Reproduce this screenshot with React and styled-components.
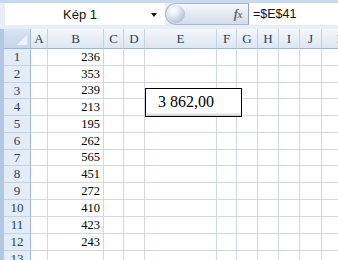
import styled, { createGlobalStyle } from "styled-components";

const GlobalStyle = createGlobalStyle`
  html, body {
    margin: 0;
    padding: 0;
    background: #ffffff;
  }
  * {
    box-sizing: border-box;
  }
`;

const COLUMNS = [
  { name: "A", width: 17 },
  { name: "B", width: 56 },
  { name: "C", width: 20 },
  { name: "D", width: 21 },
  { name: "E", width: 72 },
  { name: "F", width: 20 },
  { name: "G", width: 21 },
  { name: "H", width: 21 },
  { name: "I", width: 21 },
  { name: "J", width: 22 },
  { name: "K", width: 40 },
];

const VALUES = [236, 353, 239, 213, 195, 262, 565, 451, 272, 410, 423, 243, null];
const ROW_HEIGHTS = [17, 17, 16, 17, 17, 17, 16, 17, 17, 17, 17, 17, 17];

const Window = styled.div`
  width: 338px;
  height: 260px;
  overflow: hidden;
  background: #b3c7e3;
  padding-left: 4px;
  display: flex;
  flex-direction: column;
`;

const FormulaBar = styled.div`
  height: 29px;
  flex-shrink: 0;
  display: flex;
  align-items: flex-start;
  padding: 3px 0 0 1px;
  margin-left: -4px;
  padding-left: 5px;
  background: linear-gradient(#c9d9ee 0, #c9d9ee 3px, #e8eef7 3px, #e8eef7 100%);
`;

const NameBox = styled.div`
  position: relative;
  width: 160px;
  height: 22px;
  background: #ffffff;
  font-family: "Liberation Sans", Arial, sans-serif;
  font-size: 13px;
  color: #111;
  display: flex;
  align-items: center;
  justify-content: center;
  padding-right: 10px;
`;

const DropArrow = styled.span`
  position: absolute;
  right: 8px;
  top: 10px;
  width: 0;
  height: 0;
  border-left: 3.5px solid transparent;
  border-right: 3.5px solid transparent;
  border-top: 4px solid #111;
`;

const FxButton = styled.div`
  position: relative;
  width: 84px;
  height: 22px;
  display: flex;
  align-items: center;
  justify-content: flex-end;
  padding-right: 6px;
  border-radius: 11px 0 0 11px;
  background: linear-gradient(#f6f8fc 0%, #e4eaf3 50%, #d3dce9 100%);
  border: 1px solid #a9b8cf;
  border-right-color: #8ea2bf;
`;

const Knob = styled.span`
  position: absolute;
  left: 1px;
  top: 1px;
  width: 18px;
  height: 18px;
  border-radius: 50%;
  background: radial-gradient(circle at 35% 30%, #ffffff 0, #e9eef6 30%, #b4c1d4 75%, #9aa9c0 100%);
`;

const FxLabel = styled.span`
  font-family: "Liberation Serif", "Times New Roman", serif;
  font-style: italic;
  font-weight: bold;
  font-size: 13px;
  color: #6d6d6d;
  letter-spacing: -0.5px;
  small {
    font-size: 10px;
  }
`;

const FormulaInput = styled.div`
  flex: 1;
  height: 22px;
  background: #ffffff;
  font-family: "Liberation Sans", Arial, sans-serif;
  font-size: 12.5px;
  color: #111;
  display: flex;
  align-items: center;
  padding-left: 4px;
`;

const Sheet = styled.div`
  position: relative;
  flex: 1;
  background: #ffffff;
  display: grid;
  grid-template-columns: 27px ${COLUMNS.map((c) => c.width + "px").join(" ")};
  grid-template-rows: 20px ${ROW_HEIGHTS.map((h) => h + "px").join(" ")};
  font-family: "Liberation Serif", "Times New Roman", serif;
`;

const Corner = styled.div`
  position: relative;
  background: linear-gradient(#d9e4f3, #c6d6ec);
  border-right: 1px solid #9eb6ce;
  border-bottom: 1px solid #9eb6ce;
  &::after {
    content: "";
    position: absolute;
    right: 3px;
    bottom: 3px;
    width: 0;
    height: 0;
    border-left: 10px solid transparent;
    border-bottom: 10px solid #eef3fa;
  }
`;

const ColHeader = styled.div`
  background: linear-gradient(#f4f7fb, #dde6f2);
  border-right: 1px solid #c5d2e2;
  border-bottom: 1px solid #9eb6ce;
  font-size: 13px;
  color: #27415f;
  display: flex;
  align-items: center;
  justify-content: center;
  padding-top: 1px;
`;

const RowHeader = styled.div`
  background: #e4ecf7;
  border-right: 1px solid #9eb6ce;
  border-bottom: 1px solid #c5d2e2;
  font-size: 13px;
  color: #27415f;
  display: flex;
  align-items: center;
  justify-content: center;
`;

const Cell = styled.div`
  border-right: 1px solid #d0d7e5;
  border-bottom: 1px solid #d0d7e5;
  font-size: 12.5px;
  color: #000;
  display: flex;
  align-items: center;
  justify-content: ${(p) => (p.$numeric ? "flex-end" : "flex-start")};
  padding-right: 3px;
`;

const Picture = styled.div`
  position: absolute;
  left: 141px;
  top: 59px;
  width: 97px;
  height: 29px;
  border: 1px solid #000;
  background: #ffffff;
  box-shadow: inset 0 -3px 2px -1px #d2d2d2;
  font-family: "Liberation Serif", "Times New Roman", serif;
  font-size: 16px;
  color: #000;
  display: flex;
  align-items: center;
  padding-left: 12px;
  padding-bottom: 1px;
`;

export default function App() {
  return (
    <>
      <GlobalStyle />
      <Window>
        <FormulaBar>
          <NameBox>
            Kép 1
            <DropArrow />
          </NameBox>
          <FxButton>
            <Knob />
            <FxLabel>
              f<small>x</small>
            </FxLabel>
          </FxButton>
          <FormulaInput>=$E$41</FormulaInput>
        </FormulaBar>
        <Sheet>
          <Corner />
          {COLUMNS.map((c) => (
            <ColHeader key={c.name}>{c.name}</ColHeader>
          ))}
          {VALUES.map((v, r) => [
            <RowHeader key={"h" + r}>{r + 1}</RowHeader>,
            ...COLUMNS.map((c) => (
              <Cell key={c.name + r} $numeric>
                {c.name === "B" && v !== null ? v : ""}
              </Cell>
            )),
          ])}
          <Picture>3 862,00</Picture>
        </Sheet>
      </Window>
    </>
  );
}
